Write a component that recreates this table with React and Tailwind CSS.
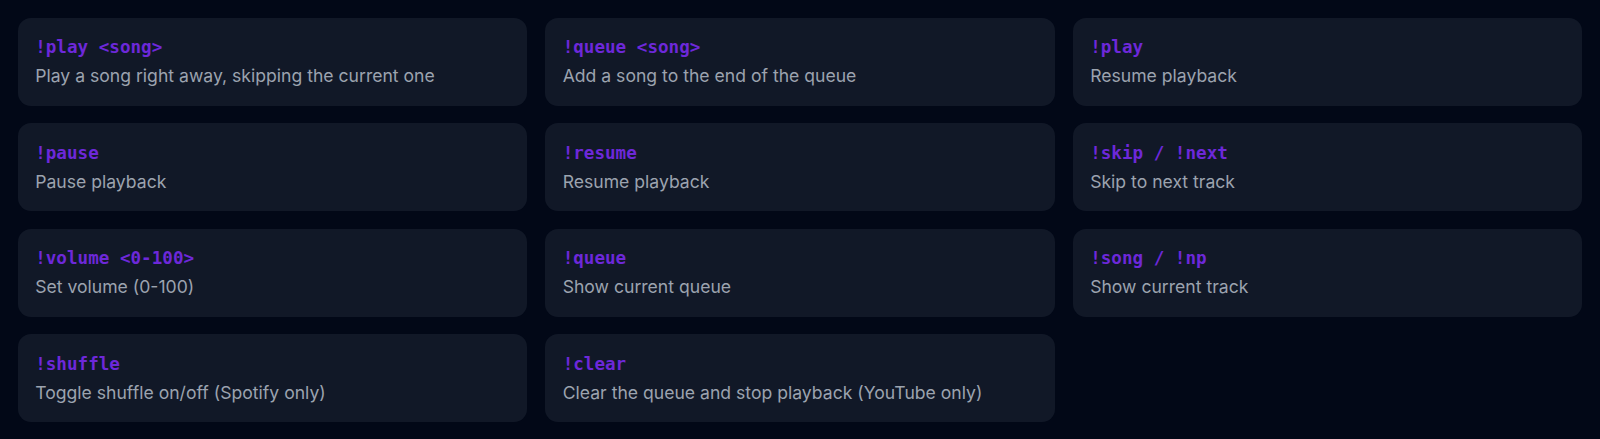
const items = [
  ["!play <song>", "Play a song right away, skipping the current one"],
  ["!queue <song>", "Add a song to the end of the queue"],
  ["!play", "Resume playback"],
  ["!pause", "Pause playback"],
  ["!resume", "Resume playback"],
  ["!skip / !next", "Skip to next track"],
  ["!volume <0-100>", "Set volume (0-100)"],
  ["!queue", "Show current queue"],
  ["!song / !np", "Show current track"],
  ["!shuffle", "Toggle shuffle on/off (Spotify only)"],
  ["!clear", "Clear the queue and stop playback (YouTube only)"],
];

export default function App() {
  return (
    <div className="min-h-[439px] w-[1600px] bg-[#020817] p-[17.6px]">
      <div className="grid grid-cols-3 gap-[17.6px]">
        {items.map(([cmd, desc], i) => (
          <div key={i} className="h-[88px] rounded-[13px] bg-[#111827] px-[17.6px] pt-[16.6px]">
            <div className="font-['DejaVu_Sans_Mono',monospace] text-[17.6px] font-bold leading-[26px] text-[#6d28d9]">{cmd}</div>
            <div className="mt-[3px] font-['Inter',sans-serif] text-[17.6px] leading-[26px] text-[#9ca3af]">{desc}</div>
          </div>
        ))}
      </div>
    </div>
  );
}
